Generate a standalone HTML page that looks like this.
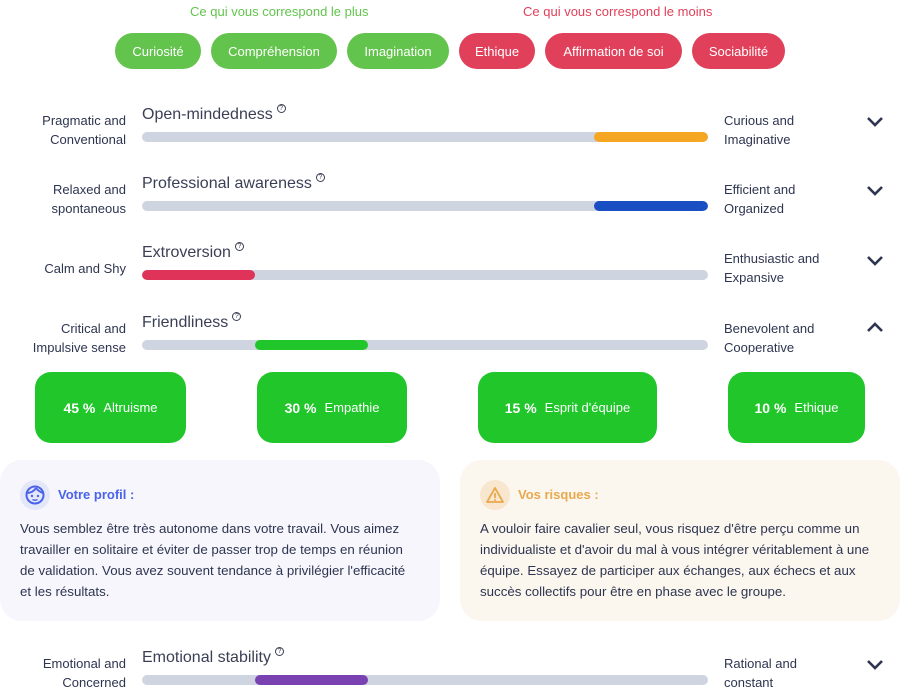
<!DOCTYPE html>
<html><head><meta charset="utf-8"><style>
*{margin:0;padding:0;box-sizing:border-box}
body{width:900px;height:690px;overflow:hidden;background:#fff;font-family:"Liberation Sans",sans-serif;color:#2d3550;position:relative}
.a{position:absolute}
.hd{font-size:13px;top:4px}
.pill{position:absolute;top:33px;height:36px;border-radius:18px;color:#fff;font-size:13px;display:flex;align-items:center;justify-content:center}
.g{background:#62c44c}.r{background:#e0405a}
.lt{position:absolute;right:774px;text-align:right;font-size:13px;line-height:19px;width:140px}
.rt{position:absolute;left:724px;font-size:13px;line-height:19px}
.tt{position:absolute;left:142px;font-size:16px;color:#3a3f55}
.tt sup{display:inline-block;font-size:7px;width:9px;height:9px;border:1px solid #3a3f55;border-radius:50%;text-align:center;line-height:7px;vertical-align:9px;margin-left:4px}
.bar{position:absolute;left:142px;width:566px;height:10px;border-radius:5px;background:#cfd5e0;overflow:hidden}
.bar i{position:absolute;top:0;height:10px;border-radius:5px}
.chev{position:absolute;left:866px;width:18px;height:12px}
.gb{position:absolute;top:372px;height:71px;border-radius:16px;background:#20c62a;color:#fff;font-size:13px;display:flex;align-items:center;justify-content:center}
.gb b{font-size:14px;margin-right:8px}
.card{position:absolute;top:460px;height:161px;border-radius:22px;width:440px;padding:0 20px}
.card p{position:absolute;left:20px;top:58px;width:430px;white-space:nowrap;font-size:13.3px;line-height:21px;color:#2d3550}
.ic{position:absolute;left:20px;top:20px;width:30px;height:30px;border-radius:15px}
.ct{position:absolute;left:58px;top:27px;font-size:13px;font-weight:bold}
</style></head><body>
<div class="a hd" style="left:190px;color:#62c44c">Ce qui vous correspond le plus</div>
<div class="a hd" style="left:523px;color:#e0405a">Ce qui vous correspond le moins</div>
<div class="pill g" style="left:115px;width:86px">Curiosité</div>
<div class="pill g" style="left:211px;width:126px">Compréhension</div>
<div class="pill g" style="left:347px;width:102px">Imagination</div>
<div class="pill r" style="left:459px;width:76px">Ethique</div>
<div class="pill r" style="left:545px;width:137px">Affirmation de soi</div>
<div class="pill r" style="left:692px;width:93px">Sociabilité</div>

<div class="lt" style="top:111px">Pragmatic and<br>Conventional</div>
<div class="tt" style="top:104px">Open-mindedness<sup>?</sup></div>
<div class="bar" style="top:132px"><i style="left:452px;width:114px;background:#f5a623"></i></div>
<div class="rt" style="top:111px">Curious and<br>Imaginative</div>
<svg class="chev" style="top:115px" viewBox="0 0 18 12"><path d="M2 3l7 7 7-7" fill="none" stroke="#2d3550" stroke-width="2.6"/></svg>

<div class="lt" style="top:180px">Relaxed and<br>spontaneous</div>
<div class="tt" style="top:173px">Professional awareness<sup>?</sup></div>
<div class="bar" style="top:201px"><i style="left:452px;width:114px;background:#1a4fc4"></i></div>
<div class="rt" style="top:180px">Efficient and<br>Organized</div>
<svg class="chev" style="top:184px" viewBox="0 0 18 12"><path d="M2 3l7 7 7-7" fill="none" stroke="#2d3550" stroke-width="2.6"/></svg>

<div class="lt" style="top:259px">Calm and Shy</div>
<div class="tt" style="top:242px">Extroversion<sup>?</sup></div>
<div class="bar" style="top:270px"><i style="left:0;width:113px;background:#e0335a"></i></div>
<div class="rt" style="top:249px">Enthusiastic and<br>Expansive</div>
<svg class="chev" style="top:254px" viewBox="0 0 18 12"><path d="M2 3l7 7 7-7" fill="none" stroke="#2d3550" stroke-width="2.6"/></svg>

<div class="lt" style="top:319px">Critical and<br>Impulsive sense</div>
<div class="tt" style="top:312px">Friendliness<sup>?</sup></div>
<div class="bar" style="top:340px"><i style="left:113px;width:113px;background:#20c62a"></i></div>
<div class="rt" style="top:319px">Benevolent and<br>Cooperative</div>
<svg class="chev" style="top:321px" viewBox="0 0 18 12"><path d="M2 10l7-7 7 7" fill="none" stroke="#2d3550" stroke-width="2.6"/></svg>

<div class="gb" style="left:35px;width:151px"><b>45 %</b>Altruisme</div>
<div class="gb" style="left:257px;width:150px"><b>30 %</b>Empathie</div>
<div class="gb" style="left:478px;width:179px"><b>15 %</b>Esprit d'équipe</div>
<div class="gb" style="left:728px;width:137px"><b>10 %</b>Ethique</div>

<div class="card" style="left:0;background:#f6f6fc">
<div class="ic" style="background:#e4e7fa"><svg width="30" height="30" viewBox="0 0 30 30"><circle cx="15" cy="15" r="8.5" fill="none" stroke="#4a63e8" stroke-width="2"/><path d="M7 13c4 0 7-2 9-5M16 8c2 3 4 4 7 5" fill="none" stroke="#4a63e8" stroke-width="2"/><circle cx="12" cy="16" r="1.2" fill="#4a63e8"/><circle cx="18" cy="16" r="1.2" fill="#4a63e8"/><path d="M12.5 19.5q2.5 1.5 5 0" fill="none" stroke="#4a63e8" stroke-width="1.5"/></svg></div>
<div class="ct" style="color:#4a63e8">Votre profil :</div>
<p>Vous semblez être très autonome dans votre travail. Vous aimez<br>travailler en solitaire et éviter de passer trop de temps en réunion<br>de validation. Vous avez souvent tendance à privilégier l'efficacité<br>et les résultats.</p>
</div>
<div class="card" style="left:460px;background:#fbf6ee">
<div class="ic" style="background:#f8e6cf"><svg width="30" height="30" viewBox="0 0 30 30"><path d="M15 8l8 14H7z" fill="none" stroke="#e8a94f" stroke-width="1.8" stroke-linejoin="round"/><path d="M15 13v5" stroke="#e8a94f" stroke-width="1.8"/><circle cx="15" cy="20" r="1" fill="#e8a94f"/></svg></div>
<div class="ct" style="color:#e8a94f">Vos risques :</div>
<p>A vouloir faire cavalier seul, vous risquez d'être perçu comme un<br>individualiste et d'avoir du mal à vous intégrer véritablement à une<br>équipe. Essayez de participer aux échanges, aux échecs et aux<br>succès collectifs pour être en phase avec le groupe.</p>
</div>

<div class="lt" style="top:654px">Emotional and<br>Concerned</div>
<div class="tt" style="top:647px">Emotional stability<sup>?</sup></div>
<div class="bar" style="top:675px"><i style="left:113px;width:113px;background:#7a42b0"></i></div>
<div class="rt" style="top:654px">Rational and<br>constant</div>
<svg class="chev" style="top:658px" viewBox="0 0 18 12"><path d="M2 3l7 7 7-7" fill="none" stroke="#2d3550" stroke-width="2.6"/></svg>
</body></html>
